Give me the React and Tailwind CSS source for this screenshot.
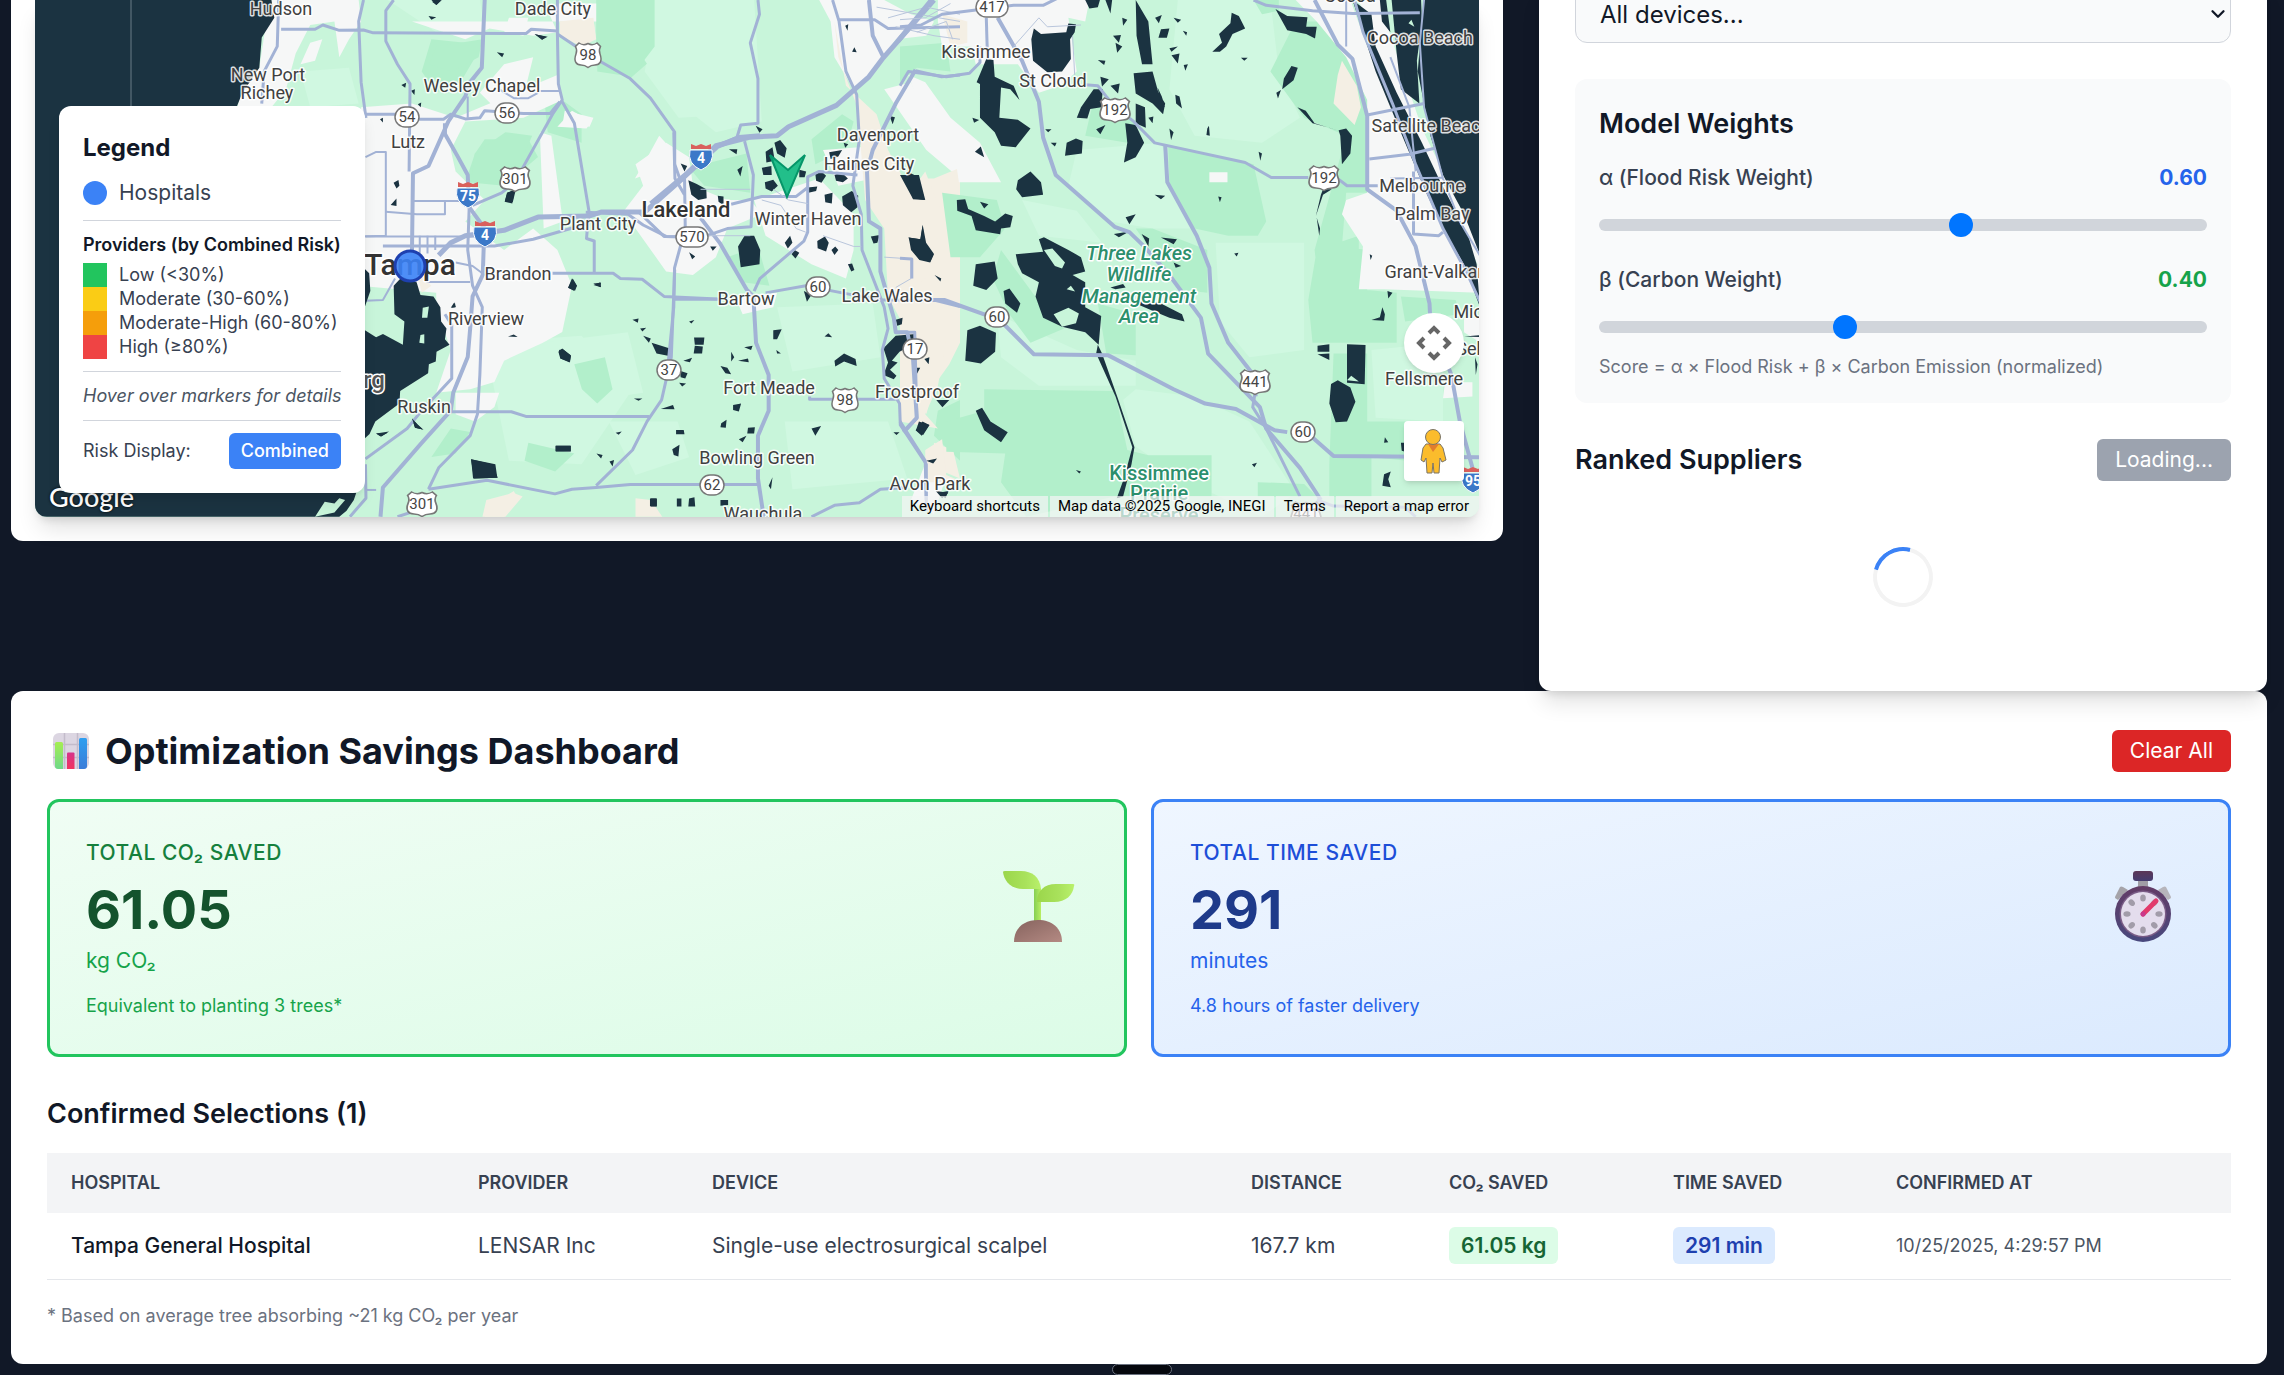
import React, { useState } from "react";
import { ChevronDown } from "lucide-react";

// Florida base map. Shapes are grouped by map tile, each tile has its own origin and scale.
const TILES = [
  {
    id: "west",
    transform: "scale(.4847 .3571)",
    urban:
      "M560 0L740 0 745 60 720 110 700 160 690 60 640 70 610 150 590 250 560 300 490 300 500 240 535 190 545 100ZM850 60L1140 60 1150 90 1100 100 1010 80 960 110ZM745 300L850 290 940 330 1150 210 1160 280 1080 330 960 340 930 420 940 480 1000 560 960 620 1040 700 1100 640 1150 700 1180 800 1160 930 1120 960 1040 1010 1020 1070 970 1090 900 1100 930 980 900 860 900 820 740 800ZM940 1100L1030 1100 1020 1140 980 1180 940 1160ZM1180 310L1220 340 1210 360 1150 355ZM1360 380L1400 440 1380 460 1350 480 1310 500 1340 430ZM1130 30L1150 10 1230 10 1230 60 1140 60ZM1050 50L1090 50 1080 100 1040 90ZM1040 180L1100 160 1080 270 1020 300 990 260ZM640 120L665 110 650 170 620 180Z",
    sand: "M1155 60L1225 60 1230 110 1200 130 1155 100ZM1010 1420L1060 1375 1070 1400 1040 1447 1000 1447ZM860 760L890 800 870 820Z",
    light: "M800 0L990 0 1000 80 900 90ZM1350 60L1500 80 1530 320 1400 330 1330 200ZM1000 960L1200 940 1300 1100 1200 1300 1050 1290ZM620 200L720 190 740 290 640 300Z",
    green:
      "M890 110L960 120 985 150 950 230 900 260 870 200ZM1000 390L1090 390 1110 440 1040 520 960 510 980 430ZM1230 0L1350 0 1350 160 1300 220 1230 140ZM1120 240L1200 320 1200 400 1130 370ZM1180 1010L1240 1010 1250 1090 1210 1100 1170 1060ZM930 1200L970 1210 940 1270 890 1280Z",
    water:
      "M0 0L560 0 566 50 540 105 535 190 500 260 488 300 470 330 470 1370 735 1380 730 1400 715 1430 700 1447 0 1447ZM890 0L910 0 900 14ZM884 45L900 48 890 55ZM1103 96L1130 103 1120 110ZM1025 146L1040 150 1036 160ZM828 238L838 232 836 246ZM848 254L856 250 855 266ZM862 292L869 287 868 300ZM784 334L790 330 790 343ZM812 512L822 504 824 520 818 528ZM806 574L818 556 818 577ZM1046 540L1064 532 1058 566 1042 562ZM1172 806L1180 780 1190 800 1184 814ZM1224 794L1240 792 1238 804ZM930 862L937 847 940 860ZM1048 942L1060 937 1068 944ZM1152 985L1160 976 1178 996 1176 1014 1156 1004ZM972 1286L1022 1300 1026 1338 976 1340ZM1146 1248L1177 1248 1177 1264 1146 1264ZM850 1172L862 1190 872 1203 856 1198ZM776 1214L800 1212 785 1222ZM1341 1396L1354 1396 1354 1418 1341 1418Z",
    holes: "M872 862L883 858 880 890 870 890ZM868 938L875 936 876 962 866 962ZM650 1447L670 1405 690 1410 700 1395 712 1400 690 1435Z",
    roads: [
      ["M580 82L650 82 666 70 700 85 750 84 770 92 1085 94 1096 82 1150 87", 3],
      ["M575 0L572 130 545 200 540 290", 3],
      ["M750 0L740 60 745 230 755 330", 3],
      ["M812 0L796 30 796 115 820 180 846 235 844 480", 3],
      ["M1000 0L994 190 970 230 960 270 925 340 884 465 852 485 850 700", 4],
      ["M1150 0L1150 95 1152 235 1160 280 1140 320 1062 510 1035 540 975 575", 3],
      ["M1150 95L1210 150 1300 220 1342 275 1392 370 1392 460 1405 510", 3],
      ["M1160 285L1185 345 1215 590 1210 668 1226 675 1226 765", 3],
      ["M754 320L820 320 866 334 915 334 930 320 960 333 990 330 1000 310 1080 318 1135 318 1155 285", 3],
      ["M754 440L775 426 796 426 796 660 740 662", 2],
      ["M850 563L965 563", 2],
      ["M796 593L860 600 918 600 918 563", 2],
      ["M918 345L918 375 945 440 965 490 968 580 1000 640", 4],
      ["M754 662L1000 662", 2],
      ["M790 689L1020 689 1100 670 1215 625", 3],
      ["M905 715L930 680 960 660 1040 645 1110 608 1215 605 1240 594 1330 594", 5],
      ["M1330 594L1400 510 1440 460 1480 410 1525 385 1568 380", 5],
      ["M968 580L965 700 975 800 995 860 990 1050 985 1160 970 1220 905 1310 884 1370", 3],
      ["M998 690L996 770 975 830 970 920 965 1000 935 1100 930 1150 870 1240 790 1365 785 1447", 4],
      ["M918 880L932 910 932 1060 870 1150 840 1200 754 1285", 3],
      ["M930 1153L1055 1153 1085 1166 1340 1166", 3],
      ["M1392 755L1385 1000 1365 1120 1335 1180 1305 1260 1230 1360", 3],
      ["M884 1370L1005 1345 1145 1383 1180 1370 1230 1365 1300 1357 1568 1357", 3],
      ["M1140 765L1265 765 1280 780 1325 782 1370 830 1480 837", 3],
      ["M880 790L970 790", 2],
      ["M754 842L790 840 815 780", 2],
      ["M866 660L866 710M882 660L882 710M898 660L898 700", 2],
      ["M940 735L975 745 1000 770", 2],
      ["M1115 255L1155 255M1030 250L1060 275 1090 275 1110 260M965 270L965 330", 2],
      ["M1318 594L1370 662 1450 664", 3],
      ["M754 1372L776 1372", 2],
      ["M722 1447L755 1395 754 1300", 3],
      ["M820 1447L870 1425", 3],
    ],
  },
  {
    id: "center",
    transform: "translate(360 0) scale(.38265 .35714)",
    urban:
      "M1200 0L1370 0 1440 40 1500 60 1480 100 1400 110 1350 190 1290 250 1240 160 1230 60ZM720 460L800 400 860 440 870 520 960 560 1020 560 1050 600 960 640 930 720 870 770 800 760 720 640 690 590 740 520ZM1030 560L1200 500 1290 600 1290 700 1270 780 1180 740 1060 660ZM1370 250L1440 230 1480 330 1568 390 1568 500 1480 420ZM1210 420L1330 410 1340 500 1250 520ZM980 830L1090 820 1080 860 1000 880ZM470 370L500 380 530 620 480 640ZM535 310L610 330 600 355 530 345ZM1480 1290L1530 1340 1500 1440 1440 1400Z",
    sand: "M1240 60L1270 240 1350 320 1380 420 1420 500 1500 500 1568 470 1568 960 1540 1020 1500 1080 1480 1160 1460 1060 1430 930 1380 830 1370 640 1320 560 1300 300 1250 160ZM1500 1240L1550 1260 1568 1340 1500 1310ZM720 1395L760 1400 790 1447 720 1447ZM330 1400L400 1380 425 1390 380 1447 320 1447ZM520 60L610 50 616 110 560 120Z",
    light:
      "M720 0L1030 0 1050 340 930 370 800 260 720 130ZM650 1180L830 1180 860 1280 720 1330ZM1090 860L1340 850 1360 1000 1130 1040ZM480 960L700 930 740 1100 480 1140ZM1110 1180L1380 1180 1430 1340 1130 1370Z",
    green:
      "M620 0L770 0 770 130 710 215 620 200ZM560 1020L640 1000 660 1090 620 1130 580 1090ZM860 470L1010 430 1020 540 900 520ZM1180 390L1260 320 1290 340 1270 420 1190 460ZM200 130L320 110 310 160 240 200 180 180ZM300 430L380 370 450 380 400 500 290 510ZM440 1240L560 1270 510 1320 430 1290ZM1510 1150L1568 1120 1568 1290 1500 1220ZM960 720L1040 690 1070 800 1000 790Z",
    water:
      "M0 740L24 765 27 815 13 858 13 925 42 944 60 935 112 965 116 900 90 880 88 800 110 775 148 790 158 826 192 830 210 860 212 900 226 920 222 950 234 965 200 985 198 1012 180 1020 178 1045 105 1095 103 1130 40 1180 25 1215 0 1240ZM290 1286L345 1300 360 1338 298 1340ZM512 1248L551 1248 551 1264 512 1264ZM520 980L530 978 551 995 548 1015 524 1004ZM544 806L556 780 567 800 562 814ZM610 798L628 790 630 804ZM378 565L385 540 405 530 398 570ZM988 690L1005 660 1030 660 1046 700 1044 740 995 748ZM858 505L880 515 905 530 906 555 884 560 866 545ZM935 548L950 550 950 575 937 565ZM1083 400L1098 392 1115 415 1110 442 1090 430ZM1060 425L1078 412 1084 450 1062 455ZM1050 470L1075 465 1076 490 1054 490ZM1058 510L1080 503 1092 520 1076 536 1060 528ZM1148 475L1166 480 1162 496 1148 496ZM1190 488L1206 480 1218 492 1206 512 1192 506ZM1240 490L1258 482 1275 500 1262 510 1244 506ZM1260 550L1285 535 1302 548 1300 580 1284 594 1262 575ZM1226 426L1260 420 1250 438 1230 445ZM1214 545L1235 540 1233 570 1216 566ZM1170 525L1195 522 1192 535 1172 540ZM1195 675L1215 662 1225 680 1218 704 1196 695ZM1110 680L1124 660 1130 680 1118 696ZM1128 712L1136 700 1148 708 1138 724ZM1232 700L1242 690 1250 700 1240 714ZM1275 740L1286 738 1292 756 1284 760ZM1335 662L1358 658 1352 680 1342 682ZM1434 665L1465 670 1470 630 1478 690 1500 712 1490 735 1462 728 1440 700ZM1430 480L1458 495 1476 560 1445 558ZM1368 975L1400 940 1452 935 1455 960 1410 985 1390 1010 1405 1015 1385 1035 1402 1052 1395 1062 1368 1050 1380 1015ZM1240 1010L1265 990 1295 1005 1298 1025 1265 1012 1242 1026ZM1080 925L1102 922 1090 950 1080 950ZM1214 942L1224 933 1234 944ZM1452 1205L1470 1180 1488 1190 1468 1220ZM1180 1200L1205 1193 1190 1220ZM740 940L760 948 755 960ZM762 960L808 975 808 997 775 990ZM873 945L900 945 898 965 875 965ZM875 968L896 970 894 990 872 990ZM845 1010L868 1002 862 1014ZM836 1038L856 1045 850 1060 838 1056ZM942 1025L960 1030 970 1048 955 1045ZM988 1010L1014 1004 1016 1014ZM1004 972L1026 968 1022 980ZM975 1134L996 1130 990 1152 975 1148ZM944 1185L958 1175 956 1198 942 1196ZM1014 1198L1032 1196 1030 1214 1012 1214ZM990 1230L1010 1220 1000 1238ZM826 1204L846 1204 848 1216 826 1216ZM816 1258L835 1245 832 1278 820 1274ZM786 1145L818 1134 822 1146ZM668 1212L684 1208 676 1217ZM618 1270L634 1274 630 1284ZM652 1292L664 1288 660 1306ZM760 1396L776 1396 776 1418 760 1418ZM828 1396L840 1396 840 1418 828 1418ZM860 1396L874 1392 876 1418 858 1418ZM942 1400L962 1400 962 1414 942 1416ZM1160 815L1180 825 1168 845ZM1068 1360L1078 1336 1074 1370ZM1480 1290L1508 1284 1498 1298ZM1400 895L1418 890 1416 908 1404 912ZM1450 1030L1464 1030 1456 1046ZM1475 1005L1488 1000 1486 1020ZM1506 1120L1540 1120 1522 1140ZM1512 1380L1538 1375 1530 1395ZM712 895L728 892 726 904ZM732 920L748 918 738 928ZM716 1116L738 1116 728 1122ZM860 900L874 896 866 906ZM964 418L986 418 984 432ZM986 475L1000 465 994 494ZM838 458L855 465 848 480ZM1034 352L1052 362 1044 372ZM1384 325L1398 328 1392 348ZM1264 400L1276 404 1268 414ZM915 690L932 690 922 702ZM860 706L876 718 868 726ZM456 95L486 103 476 112ZM1268 72L1276 68 1274 86ZM1286 145L1292 132 1298 146ZM240 862L248 847 250 860ZM136 1172L150 1188 166 1203 144 1198ZM42 1214L76 1208 56 1222ZM1088 980L1100 990 1090 990ZM1410 1210L1394 1210 1402 1218ZM970 985L978 1000 970 1012ZM834 1072L852 1074 842 1082ZM188 5L214 0 200 14Z",
    holes: "M164 862L180 858 176 890 162 890ZM158 938L168 936 168 962 155 960Z",
    roads: [
      ["M1040 0L1044 40 1020 120 1040 220 1040 345 995 350 985 385 930 410", 3],
      ["M1500 0L1365 165 1330 215 1245 295 1120 355 1090 380 1020 384 930 408 850 490 760 570", 5],
      ["M1235 0L1252 60 1270 200 1298 265 1305 390 1288 520 1310 600 1312 700 1370 860 1380 920 1365 980 1370 1060 1410 1130 1412 1190 1480 1300 1480 1430", 3],
      ["M1330 0L1340 100 1370 165 M1452 195L1400 290 1340 420 1325 480 1330 620 1360 640 1360 760 1395 890 1400 930 1430 930 1445 1000 1455 1170 1420 1210", 4],
      ["M1452 198L1520 215 1568 210", 3],
      ["M1250 55L1345 55 1380 80 1568 75", 3],
      ["M820 370L823 500 848 545", 3],
      ["M848 490L850 640 822 750 820 860 806 1010", 3],
      ["M1005 395L1028 490 1022 635 960 640 895 664 800 662 740 630 700 600 590 594", 3],
      ["M890 610L940 680 1010 810 1028 830 1035 960 1068 1050 1068 1150 1040 1220 1040 1340 1055 1447", 4],
      ["M1030 815L1045 780 1160 675 1170 650 1170 495 1200 480 1300 490", 3],
      ["M1060 820L1165 800 1260 820 1360 840 1500 840 1568 858", 3],
      ["M970 572L1050 550 1140 550 1170 525", 3],
      ["M1175 1110L1175 1118 1400 1118", 3],
      ["M820 838L940 838", 3],
      ["M1180 1447L1240 1415 1305 1408 1360 1370 1430 1365", 3],
      ["M1370 720L1440 725 1440 780 1400 805", 1],
      ["M1050 560L1100 575 1140 640 1165 650M1210 660L1290 690 1310 690M890 530L1020 530M900 660L1020 660M1170 570L1120 560 1080 530", 1],
      ["M1350 20L1568 60M1380 50L1480 20 1568 40M1400 75L1500 100 1568 110", 1],
    ],
  },
  {
    id: "east",
    transform: "translate(900 0) scale(.42092 .35714)",
    urban:
      "M90 0L450 0 440 60 400 50 420 200 380 240 330 260 280 180 180 180 170 130 100 130 90 60ZM20 210L60 230 120 330 190 400 240 510 140 510 130 430 70 380ZM940 0L1070 0 1110 130 1160 250 1200 350 1240 430 1290 560 1380 760 1380 820 1150 810 1090 810 1100 690 1050 600 1060 560 1110 540 1110 280 1060 160 990 60ZM735 482L778 482 778 510 735 510ZM1295 1070L1360 1070 1360 1110 1290 1115ZM1340 890L1380 890 1380 960 1340 930ZM1150 0L1160 80 1240 360 1290 480 1380 700 1380 760 1300 560 1220 420 1120 100 1090 0Z",
    sand: "M100 40L160 60 160 120 120 130ZM1050 170L1085 240 1095 300 1080 350 1030 290 1040 210ZM0 580L60 480 80 540 100 600 100 680 60 640 0 640ZM0 830L80 850 110 950 90 1080 60 1160 90 1200 0 1180ZM60 1260L100 1230 110 1330 150 1350 60 1350ZM0 700L30 720 60 780 0 830Z",
    light:
      "M660 0L880 0 900 200 950 330 860 400 700 380 640 250ZM420 420L620 400 690 640 600 640 500 620 400 520ZM750 680L960 680 960 980 830 1000 760 900ZM230 880L420 980 560 1010 560 1080 330 1080 240 1000ZM560 1090L700 1110 830 1180 940 1380 860 1447 740 1380 740 1275 590 1275 560 1250 530 1120ZM1120 980L1290 960 1290 1180 1130 1170ZM290 560L420 590 480 680 330 660Z",
    green:
      "M637 405L840 460 870 620 850 660 780 660 700 640 640 520ZM940 60L1060 60 1110 280 1110 540 1060 540 1050 690 1110 700 1110 960 1010 960 985 700 1060 380 960 330 880 200ZM990 700L1090 660 1090 810 1180 820 1180 960 980 960 970 840ZM1030 990L1110 990 1110 1180 1290 1180 1290 1300 1120 1280 1120 1390 1020 1390 1020 1300ZM200 1090L510 1095 540 1260 590 1275 740 1275 740 1390 510 1390 300 1447 240 1350 250 1270 110 1265 110 1180 200 1150ZM460 280L560 340 540 400 440 380ZM100 540L230 560 250 640 190 720 120 720ZM600 640L730 700 730 820 660 810 560 640ZM470 850L560 880 560 995 490 990ZM240 700L340 860 390 920 310 960 260 880 220 780ZM840 0L900 0 900 30 860 40ZM0 130L110 120 120 200 40 190 0 230ZM850 1350L960 1355 990 1390 850 1390ZM1190 830L1320 840 1330 880 1200 900Z",
    water:
      "M1245 0L1380 0 1380 720 1340 600 1290 490 1260 380 1230 200 1240 60ZM1168 0L1238 0 1240 60 1228 170 1234 290 1190 250 1180 150ZM1075 0L1120 40 1130 130 1180 260 1240 400 1280 500 1350 660 1370 740 1378 860 1340 740 1290 640 1250 540 1200 400 1130 200ZM1140 0L1155 0 1165 90 1145 60ZM318 80L335 95 395 90 400 66 418 68 415 90 404 110 406 165 385 200 350 202 316 170 312 110ZM205 165L222 168 225 215 270 240 284 280 262 250 240 245 236 330 280 335 310 360 275 412 240 408 225 370 190 330 190 235 182 230ZM280 505L310 480 335 510 340 545 290 552 276 530ZM135 560L155 558 162 585 200 605 226 620 250 598 268 605 262 636 240 640 238 656 180 645 170 605 136 590ZM180 740L225 732 232 780 205 812 174 800ZM275 712L340 705 330 670 342 664 400 700 430 720 440 760 410 770 440 790 440 860 478 885 472 965 440 930 385 915 340 890 322 830 330 790 290 765 280 740ZM160 925L190 912 228 932 226 985 192 1018 155 1010ZM246 815L260 808 286 850 278 876 250 850ZM180 1150L195 1142 215 1180 256 1210 240 1238 200 1205ZM560 0L590 60 600 180 575 180 562 100ZM555 205L600 200 614 260 630 290 625 320 600 290 560 262ZM560 290L582 300 584 358 560 345ZM535 345L560 350 580 400 560 440 532 455 540 400ZM430 300L460 250 482 250 478 300 452 305 445 332 420 330ZM396 400L418 388 434 395 432 430 392 436ZM476 215L496 222 480 242ZM500 240L522 234 518 262ZM742 145L765 120 758 95 785 65 788 36 805 45 820 80 790 95 775 130 760 145ZM892 25L920 45 968 48 965 75 990 75 986 108 965 95 920 85ZM912 220L930 185 945 190 935 225 908 250ZM894 260L905 252 898 276ZM1042 365L1060 360 1074 380 1070 430 1050 460 1046 380ZM1062 964L1106 966 1104 1076 1062 1072ZM992 968L1020 964 1020 985 992 985ZM992 992L1020 990 1020 1008ZM1024 1075L1040 1065 1070 1085 1082 1125 1062 1180 1035 1182 1020 1130ZM470 965L480 990 516 1110 557 1252 550 1300 530 1390 515 1395 532 1340 552 1252 512 1110 466 990ZM1005 530L1026 530 1005 545 988 605 1000 545ZM990 610L998 640 996 660ZM944 300L964 310 985 345 1048 368 1020 358 980 345ZM560 850L580 840 620 850 670 880 676 900 640 890 600 870ZM500 805L530 795 536 805 512 810ZM20 665L48 670 54 630 62 680 80 710 72 733 45 725ZM0 490L45 490 60 560 30 555ZM536 608L560 600 545 628ZM508 655L545 648 520 664ZM620 665L658 670 650 684ZM574 655L592 668 590 690ZM440 0L475 0 470 20 450 24ZM488 0L504 0 500 38ZM506 100L525 98 520 120ZM512 120L528 130 516 148ZM620 82L640 80 634 106 614 106ZM645 155L664 150 660 178ZM606 50L622 42 615 65ZM654 265L664 270 670 304 656 290ZM674 182L684 180 678 198ZM470 168L488 170 485 182ZM810 162L826 162 818 170ZM730 360L734 352 736 380 728 378ZM852 425L860 430 856 450ZM756 550L764 552 760 566ZM605 545L630 548 620 558ZM794 710L804 708 800 718ZM1158 815L1170 820 1160 836ZM1146 860L1152 880 1150 898 1120 896 1140 888ZM1150 1328L1166 1320 1160 1342 1166 1364 1146 1360ZM1152 1224L1160 1238 1150 1240ZM1190 1240L1200 1240 1200 1265 1192 1262ZM1366 1000L1372 1020 1368 1050ZM1340 942L1380 938 1380 944ZM45 1180L70 1190 55 1218 38 1205ZM85 1375L115 1380 100 1395ZM418 1316L430 1320 426 1326ZM836 1300L848 1296 842 1308ZM190 565L210 572 200 584ZM178 425L192 410 200 440ZM172 330L188 336 176 344ZM345 362L360 362 352 370ZM358 400L372 400 368 410ZM466 362L488 350 476 376ZM640 360L650 370 644 392ZM82 770L98 780 96 788ZM528 50L540 55 530 72ZM650 50L668 55 660 64ZM672 86L682 90 680 100ZM640 135L660 130 645 145ZM1116 712L1122 716 1118 728ZM612 245L622 270 630 300 618 280ZM590 330L602 326 600 345ZM636 690L652 700 640 710ZM650 735L668 745 655 750Z",
    holes: "M342 700L362 696 392 735 385 752 368 745ZM365 880L400 862 425 878 418 905 385 915ZM396 810L406 800 416 816ZM1062 1065L1072 1052 1090 1068ZM1208 65L1215 55 1222 75Z",
    roads: [
      ["M75 0L-5 115", 5],
      ["M0 75L50 70 100 40 270 15 340 15 400 -20", 3],
      ["M205 50L208 165", 3],
      ["M232 50L290 170 330 285 340 385 370 490 510 635 545 650 580 690 640 770 715 890 732 990 855 1140 870 1200 950 1310 1000 1400", 4],
      ["M0 240L20 200 110 215 165 205 190 175 190 130", 3],
      ["M440 237L470 240 490 270 512 300 555 340 605 400 820 455 882 497 970 497", 3],
      ["M1040 500L1062 520 1135 520", 3],
      ["M630 405L635 510 705 660 735 750 740 850 780 960 840 1050 845 1110", 4],
      ["M845 1090L838 1140 870 1200 950 1390", 3],
      ["M75 840L105 840 200 880 231 889 318 992 495 995 650 1090 725 1130 798 1145 890 1205 920 1210", 4],
      ["M980 1225L1030 1277 1380 1280", 4],
      ["M985 0L1040 125 1075 165 1110 325 1110 530 1180 590 1225 690 1258 850 1260 900 1310 1050 1330 1180 1360 1310", 4],
      ["M840 0L870 15 980 30 1075 38 1235 36", 3],
      ["M1080 0L1100 90 1170 290 1225 460 1290 640 1345 760 1380 850", 3],
      ["M1245 0L1235 120 1245 300 1290 500 1330 620 1380 720", 2],
      ["M1110 322L1245 290M1115 445L1210 432 1270 415M1220 480L1220 655 1280 660 1290 650", 3],
      ["M1060 0L1060 130M1165 160L1210 300 1225 480M1165 500L1290 498", 2],
      ["M0 55L60 50 120 10M40 90L110 60 125 110M330 50L350 75 430 70M270 130L330 50M410 100L415 210", 1],
      ["M990 1400L1030 1417 1200 1420 1225 1447", 3],
      ["M0 930L35 930 40 1170 10 1210M0 1180L60 1290 62 1400M0 723L28 725 28 780", 3],
    ],
  },
];

const CITIES = [
  [281, 9, "Hudson"],
  [553, 9, "Dade City"],
  [268, 75, "New Port"],
  [267, 93, "Richey"],
  [482, 86, "Wesley Chapel"],
  [408, 142, "Lutz"],
  [598, 224, "Plant City"],
  [518, 274, "Brandon"],
  [486, 319, "Riverview"],
  [424, 407, "Ruskin"],
  [746, 299, "Bartow"],
  [878, 135, "Davenport"],
  [869, 164, "Haines City"],
  [808, 219, "Winter Haven"],
  [887, 296, "Lake Wales"],
  [769, 388, "Fort Meade"],
  [917, 392, "Frostproof"],
  [757, 458, "Bowling Green"],
  [930, 484, "Avon Park"],
  [763, 514, "Wauchula"],
  [986, 52, "Kissimmee"],
  [1053, 81, "St Cloud"],
  [1420, 38, "Cocoa Beach"],
  [1350, -4, "Cocoa"],
  [1431, 126, "Satellite Beach"],
  [1422, 186, "Melbourne"],
  [1432, 214, "Palm Bay"],
  [1441, 272, "Grant-Valkaria"],
  [1478, 312, "Micco"],
  [1496, 349, "Sebastian"],
  [1424, 379, "Fellsmere"],
];

const PARKS = [
  [1139, 253, "Three Lakes", true],
  [1139, 274, "Wildlife", true],
  [1139, 296, "Management", true],
  [1139, 316, "Area", true],
  [1159, 473, "Kissimmee", false],
  [1159, 493, "Prairie", false],
  [1159, 515, "Preserve", false],
];

const SHIELDS = [
  ["us", 588, 55, "98"],
  ["state", 407, 117, "54"],
  ["state", 507, 113, "56"],
  ["us", 515, 179, "301"],
  ["interstate", 468, 195, "75"],
  ["interstate", 485, 234, "4"],
  ["interstate", 701, 157, "4"],
  ["state", 692, 237, "570"],
  ["state", 818, 287, "60"],
  ["state", 669, 370, "37"],
  ["state", 915, 349, "17"],
  ["us", 845, 400, "98"],
  ["state", 712, 485, "62"],
  ["us", 422, 504, "301"],
  ["state", 992, 7, "417"],
  ["us", 1115, 110, "192"],
  ["us", 1324, 178, "192"],
  ["us", 1255, 382, "441"],
  ["state", 997, 317, "60"],
  ["state", 1303, 432, "60"],
  ["interstate", 1473, 480, "95"],
  ["us", 1306, 514, "441"],
];

const RISK_LEVELS = [
  { label: "Low (<30%)", color: "bg-[#22c55e]" },
  { label: "Moderate (30-60%)", color: "bg-[#facc15]" },
  { label: "Moderate-High (60-80%)", color: "bg-[#f59e0b]" },
  { label: "High (≥80%)", color: "bg-[#ef4444]" },
];

const SELECTIONS = [
  {
    hospital: "Tampa General Hospital",
    provider: "LENSAR Inc",
    device: "Single-use electrosurgical scalpel",
    distance: "167.7 km",
    co2: "61.05 kg",
    time: "291 min",
    confirmedAt: "10/25/2025, 4:29:57 PM",
  },
];

const Shield = ({ kind, x, y, label }) => {
  const w = label.length > 2 ? 16 : 12;
  return (
    <g transform={`translate(${x} ${y})`}>
      {kind === "state" && (
        <rect x={-w} y="-10" width={w * 2} height="20" rx="10" fill="#fff" stroke="#777" strokeWidth="1.5" />
      )}
      {kind === "us" && (
        <path
          transform={label.length > 2 ? "scale(1.15 1)" : undefined}
          d="M-9-12Q-4.500-9 0-11.500Q4.500-9 9-12L12.500-8.500Q10.500-5 12-1C14.500 6 12 10 7 10Q3 10 0 12.500Q-3 10-7 10C-12 10-14.500 6-12-1Q-10.500-5-12.500-8.500Z"
          fill="#fff"
          stroke="#777"
          strokeWidth="1.5"
        />
      )}
      {kind === "interstate" && (
        <g>
          <path d="M-11-7Q-14 7 0 13Q14 7 11-7Z" fill="#3b78c8" stroke="#fff" strokeWidth="1" />
          <path d="M-10-8L-10-13-5-11 0-13 5-11 10-13 10-8Z" fill="#d9605c" />
        </g>
      )}
      <text
        y={kind === "interstate" ? 6 : 5}
        textAnchor="middle"
        fontSize={kind === "interstate" ? 14 : 15}
        fontWeight={kind === "interstate" ? 700 : 400}
        fill={kind === "interstate" ? "#fff" : "#444"}
      >
        {label}
      </text>
    </g>
  );
};

const FloridaMap = () => (
  <svg
    viewBox="35 0 1444 517"
    preserveAspectRatio="xMidYMid slice"
    className="block w-full h-[517px] font-[Roboto,sans-serif]"
    role="img"
    aria-label="Map"
  >
    <rect x="0" y="0" width="1500" height="520" fill="#c8f5da" />
    {TILES.map((tile) => (
      <g key={tile.id} transform={tile.transform}>
        <path d={tile.light} fill="#d0f8e1" />
        <path d={tile.green} fill="#b2efcb" />
        <path d={tile.urban} fill="#f6f7f7" />
        <path d={tile.sand} fill="#f4efe4" />
      </g>
    ))}
    {TILES.map((tile) => (
      <g key={tile.id} transform={tile.transform}>
        <path d={tile.water} fill="#1b3341" />
        <path d={tile.holes} fill="#c8f5da" />
        {tile.roads.map(([d, width]) => (
          <path
            key={d}
            d={d}
            fill="none"
            stroke={width > 1 ? "#a2b2d5" : "#b9c6dc"}
            strokeWidth={width}
            strokeLinejoin="round"
            vectorEffect="non-scaling-stroke"
          />
        ))}
      </g>
    ))}
    <path d="M131 0V110" stroke="#6b7d87" strokeWidth="1" />
    <g textAnchor="middle" stroke="#fff" strokeWidth="3" strokeLinejoin="round" paintOrder="stroke">
      {CITIES.map(([x, y, name]) => (
        <text key={name} x={x} y={y + 6} fontSize="18" fill="#404040" strokeOpacity="0.85">
          {name}
        </text>
      ))}
      {PARKS.map(([x, y, name, italic]) => (
        <text
          key={name + y}
          x={x}
          y={y + 7}
          fontSize="20"
          fontWeight="500"
          fontStyle={italic ? "italic" : "normal"}
          fill="#2c8f6c"
        >
          {name}
        </text>
      ))}
      <text x="686" y="217" fontSize="22" fontWeight="500" fill="#333">
        Lakeland
      </text>
      <text x="410" y="275" fontSize="30" fontWeight="500" fill="#333">
        Tampa
      </text>
      <text x="374" y="388" fontSize="24" fontWeight="500" fill="#555">
        rg
      </text>
    </g>
    {SHIELDS.map(([kind, x, y, label]) => (
      <Shield key={`${x}-${y}`} kind={kind} x={x} y={y} label={label} />
    ))}
    <circle cx="410" cy="266" r="15" fill="#3b82f6" fillOpacity="0.9" stroke="#1e40af" strokeWidth="3" />
    <path d="M770 155L788 170 805 155 787 197Z" fill="#10b981" fillOpacity="0.9" stroke="#059669" strokeWidth="2" />
  </svg>
);

const MapLegend = () => (
  <div className="absolute left-6 bottom-6 w-[306px] bg-white rounded-xl shadow-lg p-6">
    <h3 className="text-2xl leading-9 font-bold text-[#111827] mb-3">Legend</h3>
    <div className="flex items-center gap-3 mb-3">
      <span className="size-6 rounded-full bg-[#3b82f6]" />
      <span className="text-[21px] leading-[30px] text-[#374151]">Hospitals</span>
    </div>
    <div className="border-t border-gray-300 pt-3">
      <p className="text-lg leading-6 font-semibold text-[#111827] whitespace-nowrap mb-1.5">
        Providers (by Combined Risk)
      </p>
      {RISK_LEVELS.map((level) => (
        <div key={level.label} className="flex items-center gap-3">
          <span className={`size-6 ${level.color}`} />
          <span className="text-lg leading-6 text-[#374151]">{level.label}</span>
        </div>
      ))}
    </div>
    <p className="mt-3 pt-3 border-t border-gray-300 text-lg leading-6 italic text-[#4b5563] whitespace-nowrap">
      Hover over markers for details
    </p>
    <div className="mt-3 pt-3 border-t border-gray-300 flex items-center justify-between">
      <span className="text-lg leading-6 text-[#374151]">Risk Display:</span>
      <button type="button" className="px-3 py-1.5 rounded-md bg-[#3b82f6] text-white text-lg leading-6 font-medium">
        Combined
      </button>
    </div>
  </div>
);

const MapControls = () => (
  <>
    <button
      type="button"
      aria-label="Map camera controls"
      className="absolute right-[15px] bottom-36 size-[60px] rounded-full bg-white shadow-md flex items-center justify-center"
    >
      <svg viewBox="0 0 60 60" className="size-[60px]" fill="none" stroke="#666" strokeWidth="4">
        <path d="M25 20L30 15 35 20M25 40L30 45 35 40M20 25L15 30 20 35M40 25L45 30 40 35" />
      </svg>
    </button>
    <button
      type="button"
      aria-label="Drag Pegman onto the map to open Street View"
      className="absolute right-[15px] bottom-9 size-[60px] rounded-sm bg-white shadow-md flex items-center justify-center"
    >
      <svg viewBox="0 0 60 60" className="size-[60px]" stroke="#7a7466" strokeWidth="1">
        <path d="M22 23L36 23 39 27 42 39 38 41 36 37 35 52 30 52 29 42 28 52 23 52 22 37 20 41 17 39 19 27Z" fill="#fbbc2c" />
        <path d="M24 23L35 23 29 31Z" fill="#e27d2d" stroke="none" />
        <circle cx="29" cy="16" r="7.500" fill="#fbbc2c" />
      </svg>
    </button>
  </>
);

const MapPanel = () => (
  <section className="self-start bg-white rounded-b-xl px-6 pb-6">
    <div className="relative rounded-b-xl shadow-[0_15px_22px_-4px_rgba(0,0,0,0.12),0_6px_9px_-4px_rgba(0,0,0,0.12)]">
      <div className="overflow-hidden rounded-b-xl">
        <FloridaMap />
      </div>
      <span className="absolute left-3.5 bottom-0.5 text-[27px] leading-9 font-medium text-white font-[Lato,sans-serif] [text-shadow:0_0_3px_#000]">
        Google
      </span>
      <MapLegend />
      <MapControls />
      <div className="absolute right-0 bottom-0 flex gap-0.5 rounded-br-xl overflow-hidden font-[Roboto,sans-serif] text-[15px] leading-[21px] text-black">
        <button type="button" className="bg-[#f5f5f5]/70 px-2">
          Keyboard shortcuts
        </button>
        <span className="bg-[#f5f5f5]/70 px-2">Map data ©2025 Google, INEGI</span>
        <a href="#terms" className="bg-[#f5f5f5]/70 px-2">
          Terms
        </a>
        <a href="#report" className="bg-[#f5f5f5]/70 pl-2 pr-2.5">
          Report a map error
        </a>
      </div>
    </div>
  </section>
);

const WeightSlider = ({ id, label, value, valueClass, onChange }) => (
  <div>
    <div className="flex items-center justify-between text-[21px] leading-[30px]">
      <label htmlFor={id} className="font-medium text-[#374151]">
        {label}
      </label>
      <span className={`font-bold ${valueClass}`}>{value.toFixed(2)}</span>
    </div>
    <input
      id={id}
      type="range"
      min="0"
      max="1"
      step="0.05"
      value={value}
      onChange={(e) => onChange(Number(e.target.value))}
      className="block w-full h-3 my-6.5 rounded-lg appearance-none bg-[#d1d5db] cursor-pointer [&::-webkit-slider-thumb]:appearance-none [&::-webkit-slider-thumb]:size-6 [&::-webkit-slider-thumb]:rounded-full [&::-webkit-slider-thumb]:bg-[#0075ff]"
    />
  </div>
);

const SupplierPanel = () => {
  const [alpha, setAlpha] = useState(0.6);
  const beta = 1 - alpha;

  return (
    <section className="relative z-10 -mt-[13px] bg-white rounded-b-xl shadow-[0_15px_22px_-4px_rgba(0,0,0,0.12),0_6px_9px_-4px_rgba(0,0,0,0.12)] px-9 pb-9">
      <div className="relative">
        <select
          aria-label="Device"
          className="block w-full h-14 px-6 text-2xl text-[#111827] bg-[#f9fafb] border border-gray-300 rounded-xl appearance-none"
        >
          <option>All devices...</option>
        </select>
        <ChevronDown className="absolute right-0.5 top-4 size-5.5 text-[#111827]" strokeWidth={2.5} />
      </div>

      {/* Model Weights */}
      <div className="mt-9 p-6 bg-[#f9fafb] rounded-xl">
        <h3 className="text-[27px] leading-[42px] font-semibold text-[#111827] mb-4.5">Model Weights</h3>
        <div className="flex flex-col gap-2">
          <WeightSlider
            id="alpha"
            label="α (Flood Risk Weight)"
            value={alpha}
            valueClass="text-[#2563eb]"
            onChange={setAlpha}
          />
          <WeightSlider
            id="beta"
            label="β (Carbon Weight)"
            value={beta}
            valueClass="text-[#16a34a]"
            onChange={(value) => setAlpha(1 - value)}
          />
        </div>
        <p className="-mt-1 text-lg leading-6 text-[#6b7280]">
          Score = α × Flood Risk + β × Carbon Emission (normalized)
        </p>
      </div>

      {/* Ranked Suppliers */}
      <div className="mt-9 flex items-center justify-between">
        <h3 className="text-[27px] leading-[42px] font-semibold text-[#111827]">Ranked Suppliers</h3>
        <button
          type="button"
          disabled
          className="px-4.5 py-1.5 rounded-md bg-[#9ca3af] text-white text-[21px] leading-[30px]"
        >
          Loading...
        </button>
      </div>
      <div className="mt-4.5 flex justify-center py-12">
        <div className="size-[60px] rounded-full border-4 border-[#f3f3f3] border-t-[#3b82f6] -rotate-30" />
      </div>
    </section>
  );
};

const ChartIcon = () => (
  <svg viewBox="0 0 36 36" className="size-9 shrink-0" aria-hidden="true">
    <defs>
      <linearGradient id="bar-green" x1="0" y1="0" x2="0" y2="1">
        <stop offset="0" stopColor="#a5ee52" />
        <stop offset="1" stopColor="#6fd98a" />
      </linearGradient>
      <linearGradient id="bar-pink" x1="0" y1="0" x2="0" y2="1">
        <stop offset="0" stopColor="#d6338b" />
        <stop offset="1" stopColor="#f0355f" />
      </linearGradient>
      <linearGradient id="bar-blue" x1="0" y1="0" x2="0" y2="1">
        <stop offset="0" stopColor="#2f9ff0" />
        <stop offset="1" stopColor="#3b7cd8" />
      </linearGradient>
    </defs>
    <rect width="36" height="36" rx="6" fill="#dcd6e2" />
    <path d="M11.500 0V36M24.500 0V36M0 11.500H36M0 24.500H36" stroke="#c3bccb" strokeWidth="1.500" />
    <path d="M2 10.500Q2 9 3.500 9H8.500Q10 9 10 10.500V36H5Q2 36 2 33Z" fill="url(#bar-green)" />
    <path d="M14 20.500Q14 19.500 15 19.500H20.500Q21.500 19.500 21.500 20.500V36H14Z" fill="url(#bar-pink)" />
    <path d="M26 6.500Q26 5 27.500 5H32.500Q34 5 34 6.500V33Q34 36 31 36H26Z" fill="url(#bar-blue)" />
  </svg>
);

const SeedlingIcon = () => (
  <svg viewBox="0 0 72 72" className="h-18 w-[98px] shrink-0" aria-hidden="true">
    <defs>
      <linearGradient id="leaf" x1="0" y1="0" x2="1" y2="0">
        <stop offset="0" stopColor="#9bd64b" />
        <stop offset="0.600" stopColor="#a9e25c" />
        <stop offset="1" stopColor="#b9f16b" />
      </linearGradient>
      <linearGradient id="stem" x1="0" y1="0" x2="1" y2="0">
        <stop offset="0" stopColor="#85cf53" />
        <stop offset="1" stopColor="#b8ee62" />
      </linearGradient>
      <linearGradient id="soil" x1="0" y1="0" x2="1" y2="1">
        <stop offset="0" stopColor="#86635e" />
        <stop offset="1" stopColor="#b48a83" />
      </linearGradient>
    </defs>
    <path d="M31 17H38V52H31Z" fill="url(#stem)" />
    <path d="M0 1Q0 0 2 0H18C29 0 37 6 38 18H20C8 18 1 10 0 1Z" fill="url(#leaf)" />
    <path d="M34 31C34 20 41 13 53 13H70Q72 13 71 15C70 24 63 31 51 31Z" fill="url(#leaf)" />
    <path d="M11 71C11 57 21 49 35 49S59 57 59 71Z" fill="url(#soil)" />
  </svg>
);

const StopwatchIcon = () => (
  <svg viewBox="0 0 72 72" className="h-18 w-[98px] shrink-0" aria-hidden="true">
    <defs>
      <linearGradient id="rim" x1="0" y1="0" x2="0" y2="1">
        <stop offset="0" stopColor="#633c66" />
        <stop offset="1" stopColor="#48487d" />
      </linearGradient>
      <linearGradient id="crown" x1="0" y1="0" x2="0" y2="1">
        <stop offset="0" stopColor="#5b3657" />
        <stop offset="1" stopColor="#443c70" />
      </linearGradient>
    </defs>
    <rect x="31" y="8" width="10" height="9" fill="#a09da6" />
    <rect x="26" y="0" width="20" height="10" rx="3" fill="url(#crown)" />
    <path d="M13 16Q14 15 16 16L21 19 11 29 8 27Q8 25 9 24Z" fill="#a5a3a9" />
    <path d="M59 16Q58 15 56 16L51 19 61 29 64 27Q64 25 63 24Z" fill="#b7b5bb" />
    <circle cx="36" cy="43" r="28" fill="url(#rim)" />
    <circle cx="36" cy="43" r="23.500" fill="#7a5c86" />
    <circle cx="36" cy="43" r="22" fill="#e4dded" />
    <g fill="#a29ca9">
      {[0, 45, 90, 135, 180, 225, 270, 315].map((angle) => (
        <ellipse key={angle} cx="36" cy="27" rx="2.800" ry="3.600" transform={`rotate(${angle} 36 43)`} />
      ))}
    </g>
    <path d="M36 43L49 30" stroke="#e23b6c" strokeWidth="5" strokeLinecap="round" />
    <circle cx="36" cy="43" r="2.500" fill="#c93a8c" />
  </svg>
);

const SavingsCard = ({ label, value, unit, note, icon, cardClass, labelClass, valueClass, textClass }) => (
  <div className={`border-3 rounded-xl p-9 bg-linear-to-br ${cardClass}`}>
    <div className="flex items-center justify-between">
      <div>
        <p className={`text-[21px] leading-[30px] font-medium tracking-wide ${labelClass}`}>{label}</p>
        <p className={`mt-3 text-[54px] leading-[60px] font-bold ${valueClass}`}>{value}</p>
        <p className={`mt-1.5 text-[21px] leading-[30px] ${textClass}`}>{unit}</p>
      </div>
      {icon}
    </div>
    <p className={`mt-4.5 text-lg leading-6 ${textClass}`}>{note}</p>
  </div>
);

const SelectionsTable = () => (
  <table className="w-full text-left">
    <thead className="bg-[#f3f4f6]">
      <tr className="text-lg leading-6 text-[#374151]">
        <th className="w-[407px] px-6 py-4.5 font-semibold">HOSPITAL</th>
        <th className="w-[234px] px-6 py-4.5 font-semibold">PROVIDER</th>
        <th className="w-[539px] px-6 py-4.5 font-semibold">DEVICE</th>
        <th className="w-[198px] px-6 py-4.5 font-semibold">DISTANCE</th>
        <th className="w-[224px] px-6 py-4.5 font-semibold">CO₂ SAVED</th>
        <th className="w-[223px] px-6 py-4.5 font-semibold">TIME SAVED</th>
        <th className="w-[359px] px-6 py-4.5 font-semibold">CONFIRMED AT</th>
      </tr>
    </thead>
    <tbody>
      {SELECTIONS.map((row) => (
        <tr key={row.hospital} className="border-b border-gray-200 text-[21px] leading-[30px] text-[#374151]">
          <td className="px-6 py-4.5 font-medium text-[#111827]">{row.hospital}</td>
          <td className="px-6 py-4.5">{row.provider}</td>
          <td className="px-6 py-4.5">{row.device}</td>
          <td className="px-6 py-4.5">{row.distance}</td>
          <td className="px-6 py-4.5">
            <span className="px-3 py-1.5 rounded-md bg-[#dcfce7] text-[#166534] font-semibold">{row.co2}</span>
          </td>
          <td className="px-6 py-4.5">
            <span className="px-3 py-1.5 rounded-md bg-[#dbeafe] text-[#1e40af] font-semibold">{row.time}</span>
          </td>
          <td className="px-6 py-4.5 text-lg leading-6 text-[#4b5563]">{row.confirmedAt}</td>
        </tr>
      ))}
    </tbody>
  </table>
);

const SavingsDashboard = () => (
  <section className="bg-white rounded-xl p-9">
    <div className="flex items-center justify-between mb-6">
      <h2 className="flex items-center gap-4 pl-1.5 text-4xl leading-12 font-bold text-[#111827]">
        <ChartIcon />
        Optimization Savings Dashboard
      </h2>
      <button type="button" className="px-4.5 py-1.5 rounded-md bg-[#dc2626] text-white text-[21px] leading-[30px]">
        Clear All
      </button>
    </div>

    <div className="grid grid-cols-2 gap-6 mb-9">
      <SavingsCard
        label="TOTAL CO₂ SAVED"
        value="61.05"
        unit="kg CO₂"
        note="Equivalent to planting 3 trees*"
        icon={<SeedlingIcon />}
        cardClass="border-[#22c55e] from-[#f0fdf4] to-[#dcfce7]"
        labelClass="text-[#15803d]"
        valueClass="text-[#14532d]"
        textClass="text-[#16a34a]"
      />
      <SavingsCard
        label="TOTAL TIME SAVED"
        value="291"
        unit="minutes"
        note="4.8 hours of faster delivery"
        icon={<StopwatchIcon />}
        cardClass="border-[#3b82f6] from-[#eff6ff] to-[#dbeafe]"
        labelClass="text-[#1d4ed8]"
        valueClass="text-[#1e3a8a]"
        textClass="text-[#2563eb]"
      />
    </div>

    <h3 className="text-[27px] leading-[42px] font-semibold text-[#111827] mb-4.5">
      Confirmed Selections ({SELECTIONS.length})
    </h3>
    <SelectionsTable />
    <p className="mt-6 text-lg leading-6 text-[#6b7280]">* Based on average tree absorbing ~21 kg CO₂ per year</p>
  </section>
);

const App = () => (
  <div className="min-h-screen overflow-hidden bg-[#111827] font-[Inter,sans-serif]">
    <main className="pl-[11px] pr-[17px]">
      <div className="grid grid-cols-[minmax(0,1fr)_728px] gap-9">
        <MapPanel />
        <SupplierPanel />
      </div>
      <SavingsDashboard />
    </main>
    <div className="mx-auto w-[60px] h-[11px] rounded-full border border-[#6b7280] bg-[#05070d]" />
  </div>
);

export default App;
